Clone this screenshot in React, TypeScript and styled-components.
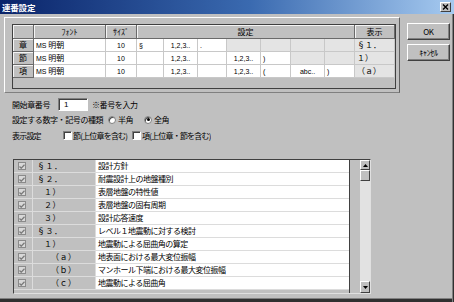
import React from 'react';
import styled, { createGlobalStyle } from 'styled-components';

const GlobalStyle = createGlobalStyle`
  html, body {
    margin: 0;
    padding: 0;
    background: #c0c0c0;
  }
  body {
    font-family: "Noto Sans CJK JP", sans-serif;
    color: #000;
  }
  * {
    box-sizing: border-box;
  }
`;

const Window = styled.div`
  width: 454px;
  height: 302px;
  background: #c0c0c0;
  display: flex;
  flex-direction: column;
  overflow: hidden;
  box-shadow: inset -1px 0 #303030, inset -2px 0 #808080, inset 0 -3px #303030,
    inset 0 -4px #808080;
`;

const TitleBar = styled.div`
  height: 14px;
  flex: none;
  display: flex;
  align-items: center;
  justify-content: space-between;
  padding: 0 2px 0 2px;
  background: linear-gradient(to right, #0a246a 0%, #3a6ab0 55%, #a6caf0 100%);
`;

const Title = styled.span`
  color: #fff;
  font-size: 8.5px;
  font-weight: 700;
  line-height: 14px;
  letter-spacing: -0.2px;
`;

const CloseButton = styled.div`
  width: 11px;
  height: 10px;
  margin-right: 1px;
  background: #c0c0c0;
  border: 1px solid;
  border-color: #fff #404040 #404040 #fff;
  display: flex;
  align-items: center;
  justify-content: center;
`;

const TopSection = styled.div`
  display: flex;
  margin-top: 3px;
  height: 76px;
  flex: none;
`;

const Panel = styled.div`
  margin-left: 4px;
  width: 396px;
  height: 76px;
  border-top: 1px solid #fff;
  border-left: 1px solid #fff;
  border-right: 1px solid #606060;
  border-bottom: 1px solid #808080;
  padding: 6px 0 0 7px;
`;

const GridBox = styled.div`
  width: 384px;
  height: 65px;
  border: 1px solid #404040;
  background: #c0c0c0;
`;

const Grid = styled.div`
  display: grid;
  grid-template-columns: 21px 72px 31px 27px 34px 29px 34px 30px 34px 30px 40px;
  grid-template-rows: 14px 13px 13px 13px;
`;

const HeadCell = styled.div<{ $span?: number }>`
  grid-column: span ${({ $span }) => $span || 1};
  background: #c0c0c0;
  border-right: 1px solid #6a6a6a;
  border-bottom: 1px solid #6a6a6a;
  box-shadow: inset 1px 1px #f4f4f4;
  font-size: 8px;
  line-height: 13px;
  text-align: center;
  white-space: nowrap;
  overflow: hidden;
`;

const RowHead = styled(HeadCell)`
  font-size: 8px;
  line-height: 12px;
`;

const Cell = styled.div<{ $off?: boolean; $align?: 'left' | 'center' }>`
  background: ${({ $off }) => ($off ? '#e4e4e4' : '#fff')};
  border-right: 1px solid #c8c8c8;
  border-bottom: 1px solid #c8c8c8;
  font-size: 8px;
  line-height: 12px;
  padding-left: ${({ $align }) => ($align === 'center' ? 0 : 2)}px;
  text-align: ${({ $align }) => $align || 'left'};
  white-space: nowrap;
  overflow: hidden;
`;

const Small = styled.span`
  font-family: "Liberation Sans", "Noto Sans CJK JP", sans-serif;
  font-size: 7px;
`;

const ButtonColumn = styled.div`
  margin-left: 7px;
  padding-top: 6px;
  display: flex;
  flex-direction: column;
  gap: 4px;
`;

const Button = styled.div`
  width: 43px;
  height: 17px;
  background: #c0c0c0;
  border: 1px solid;
  border-color: #fff #404040 #404040 #fff;
  box-shadow: inset -1px -1px #808080;
  font-size: 8px;
  line-height: 15px;
  text-align: center;
  letter-spacing: -0.3px;
`;

const Form = styled.div`
  margin-top: 5px;
  padding-left: 12px;
  display: flex;
  flex-direction: column;
  flex: none;
`;

const FormRow = styled.div<{ $gap?: number; $tight?: boolean }>`
  display: flex;
  align-items: center;
  height: 13px;
  margin-top: ${({ $gap }) => $gap || 0}px;
  font-size: 8px;
  letter-spacing: ${({ $tight }) => ($tight ? -0.8 : -0.4)}px;
  white-space: nowrap;
`;

const Label = styled.span<{ $w?: number }>`
  width: ${({ $w }) => ($w ? `${$w}px` : 'auto')};
  flex: none;
  overflow: hidden;
`;

const TextInput = styled.div`
  width: 30px;
  height: 13px;
  background: #fff;
  border: 1px solid;
  border-color: #808080 #fff #fff #808080;
  box-shadow: inset 1px 1px #404040;
  font-family: "Liberation Sans", sans-serif;
  font-size: 8px;
  line-height: 11px;
  padding-left: 5px;
  margin-right: 4px;
`;

const Radio = styled.span<{ $on?: boolean }>`
  width: 8px;
  height: 8px;
  border-radius: 50%;
  background: #fff;
  border: 1px solid #808080;
  box-shadow: inset 1px 1px #404040;
  display: inline-flex;
  align-items: center;
  justify-content: center;
  margin-right: 2px;
  flex: none;
  &::after {
    content: '';
    width: 3px;
    height: 3px;
    border-radius: 50%;
    background: ${({ $on }) => ($on ? '#000' : 'transparent')};
  }
`;

const Check = styled.span`
  width: 9px;
  height: 9px;
  background: #fff;
  border: 1px solid;
  border-color: #808080 #fff #fff #808080;
  box-shadow: inset 1px 1px #404040;
  margin-right: 1px;
  flex: none;
`;

const ListBox = styled.div`
  margin-top: 17px;
  margin-left: 13px;
  width: 358px;
  height: 135px;
  flex: none;
  display: flex;
  border-top: 1px solid #404040;
  border-left: 1px solid #404040;
  border-right: 1px solid #e0e0e0;
  border-bottom: 1px solid #e0e0e0;
  background: #c0c0c0;
`;

const Rows = styled.div`
  width: 336px;
  border-right: 1px solid #404040;
  display: flex;
  flex-direction: column;
  background: #c0c0c0;
`;

const ListRow = styled.div`
  display: grid;
  grid-template-columns: 19px 63px 1fr;
  height: 13px;
  border-bottom: 1px solid #dcdcdc;
  background: #fff;
  font-size: 8px;
  line-height: 12px;
  white-space: nowrap;
`;

const CheckCell = styled.div`
  background: #c0c0c0;
  border-right: 1px solid #dcdcdc;
  display: flex;
  align-items: center;
  padding-left: 4px;
`;

const NumCell = styled.div<{ $level: number }>`
  background: #c0c0c0;
  border-right: 1px solid #dcdcdc;
  padding-left: ${({ $level }) => 4 + $level * 7}px;
  letter-spacing: 0.5px;
`;

const TextCell = styled.div`
  padding-left: 2px;
  letter-spacing: -0.5px;
  overflow: hidden;
`;

const GrayCheck = styled.span`
  width: 8px;
  height: 8px;
  border: 1px solid #8a8a8a;
  background: #d8d8d8;
  display: flex;
  align-items: center;
  justify-content: center;
`;

const Gap = styled.div`
  width: 10px;
  background: #c0c0c0;
`;

const Scrollbar = styled.div`
  width: 10px;
  display: flex;
  flex-direction: column;
  background: #e2e2e2;
`;

const ScrollButton = styled.div<{ $h: number }>`
  height: ${({ $h }) => $h}px;
  background: #c0c0c0;
  border: 1px solid;
  border-color: #fff #404040 #404040 #fff;
  display: flex;
  align-items: center;
  justify-content: center;
`;

const Track = styled.div`
  flex: 1;
`;

const items: { num: string; text: string; level: number }[] = [
  { num: '§１．', text: '設計方針', level: 0 },
  { num: '§２．', text: '耐震設計上の地盤種別', level: 0 },
  { num: '１）', text: '表層地盤の特性値', level: 1 },
  { num: '２）', text: '表層地盤の固有周期', level: 1 },
  { num: '３）', text: '設計応答速度', level: 1 },
  { num: '§３．', text: 'レベル１地震動に対する検討', level: 0 },
  { num: '１）', text: '地震動による屈曲角の算定', level: 1 },
  { num: '（ａ）', text: '地表面における最大変位振幅', level: 2 },
  { num: '（ｂ）', text: 'マンホール下端における最大変位振幅', level: 2 },
  { num: '（ｃ）', text: '地震動による屈曲角', level: 2 },
];

type Setting = { v: string; center?: boolean } | null;

const rows: { head: string; settings: Setting[]; display: string }[] = [
  {
    head: '章',
    settings: [{ v: '§' }, { v: '1,2,3..', center: true }, { v: '.' }, null, null, null, null],
    display: '§１．',
  },
  {
    head: '節',
    settings: [{ v: '' }, { v: '1,2,3..', center: true }, { v: '' }, { v: '1,2,3..', center: true }, { v: ')' }, null, null],
    display: '１）',
  },
  {
    head: '項',
    settings: [
      { v: '' },
      { v: '1,2,3..', center: true },
      { v: '' },
      { v: '1,2,3..', center: true },
      { v: '(' },
      { v: 'abc..', center: true },
      { v: ')' },
    ],
    display: '（ａ）',
  },
];

const Arrow = ({ up }: { up?: boolean }) => (
  <svg width="5" height="3" viewBox="0 0 5 3">
    <polygon points={up ? '2.5,0 5,3 0,3' : '0,0 5,0 2.5,3'} fill="#000" />
  </svg>
);

const App: React.FC = () => (
  <>
    <GlobalStyle />
    <Window>
      <TitleBar>
        <Title>連番設定</Title>
        <CloseButton>
          <svg width="7" height="6" viewBox="0 0 7 6">
            <path d="M1 0.5 L6 5.5 M6 0.5 L1 5.5" stroke="#000" strokeWidth="1.4" />
          </svg>
        </CloseButton>
      </TitleBar>

      <TopSection>
        <Panel>
          <GridBox>
            <Grid>
              <HeadCell />
              <HeadCell>ﾌｫﾝﾄ</HeadCell>
              <HeadCell>ｻｲｽﾞ</HeadCell>
              <HeadCell $span={7}>設定</HeadCell>
              <HeadCell>表示</HeadCell>
              {rows.map((r) => (
                <React.Fragment key={r.head}>
                  <RowHead>{r.head}</RowHead>
                  <Cell>
                    <Small>MS</Small> 明朝
                  </Cell>
                  <Cell $align="center">
                    <Small>10</Small>
                  </Cell>
                  {r.settings.map((s, i) =>
                    s ? (
                      <Cell key={i} $align={s.center ? 'center' : 'left'}>
                        <Small>{s.v}</Small>
                      </Cell>
                    ) : (
                      <Cell key={i} $off />
                    )
                  )}
                  <Cell $off>{r.display}</Cell>
                </React.Fragment>
              ))}
            </Grid>
          </GridBox>
        </Panel>
        <ButtonColumn>
          <Button>OK</Button>
          <Button>ｷｬﾝｾﾙ</Button>
        </ButtonColumn>
      </TopSection>

      <Form>
        <FormRow>
          <Label $w={46}>開始章番号</Label>
          <TextInput>1</TextInput>
          <Label>※番号を入力</Label>
        </FormRow>
        <FormRow $gap={2}>
          <Label $w={96}>設定する数字・記号の種類</Label>
          <Radio />
          <Label $w={26}>半角</Label>
          <Radio $on />
          <Label>全角</Label>
        </FormRow>
        <FormRow $gap={3} $tight>
          <Label $w={51}>表示設定</Label>
          <Check />
          <Label $w={59}>節(上位章を含む)</Label>
          <Check />
          <Label>項(上位章・節を含む)</Label>
        </FormRow>
      </Form>

      <ListBox>
        <Rows>
          {items.map((it, i) => (
            <ListRow key={i}>
              <CheckCell>
                <GrayCheck>
                  <svg width="6" height="5" viewBox="0 0 6 5">
                    <path d="M0.5 2.5 L2.2 4.2 L5.5 0.8" stroke="#7a7a7a" strokeWidth="1.3" fill="none" />
                  </svg>
                </GrayCheck>
              </CheckCell>
              <NumCell $level={it.level}>{it.num}</NumCell>
              <TextCell>{it.text}</TextCell>
            </ListRow>
          ))}
        </Rows>
        <Gap />
        <Scrollbar>
          <ScrollButton $h={10}>
            <Arrow up />
          </ScrollButton>
          <ScrollButton $h={11} />
          <Track />
          <ScrollButton $h={12}>
            <Arrow />
          </ScrollButton>
        </Scrollbar>
      </ListBox>
    </Window>
  </>
);

export default App;
